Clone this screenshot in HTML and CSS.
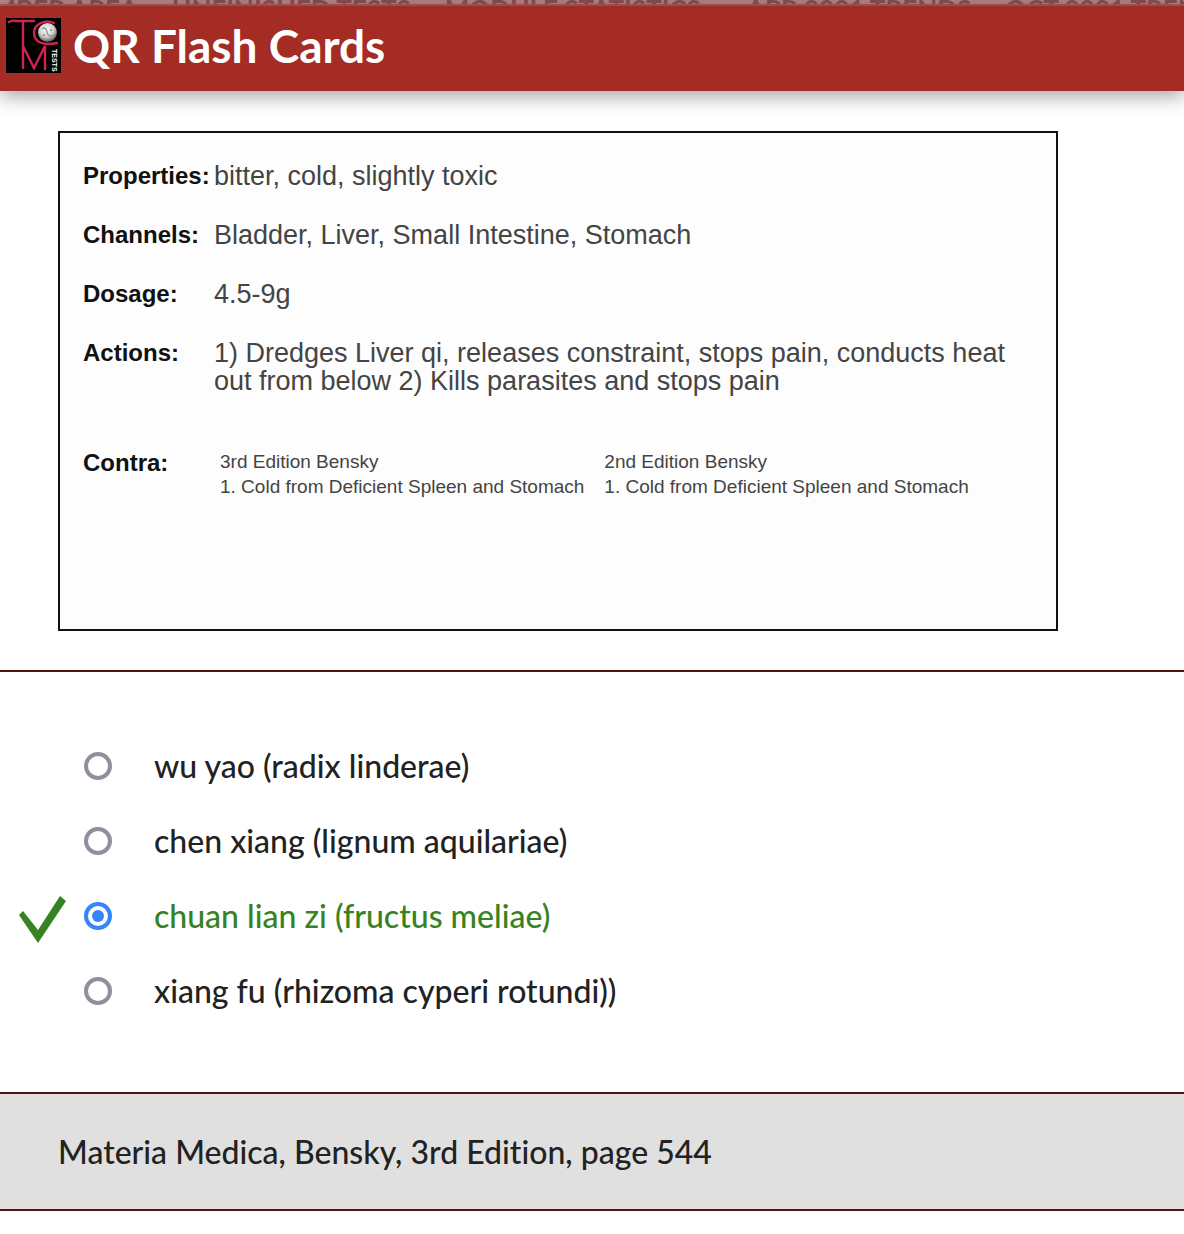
FILE: index.html
```
<!DOCTYPE html>
<html lang="en">
<head>
<meta charset="utf-8">
<title>QR Flash Cards</title>
<link rel="stylesheet" href="styles.css">
</head>
<body>
<nav class="topnav" aria-label="Sections">
  <div class="nav-group">
    <a href="#member">MEMBER AREA</a>
    <a href="#unfinished">UNFINISHED TESTS</a>
    <a href="#modules">MODULE STATISTICS</a>
  </div>
  <div class="nav-group">
    <a href="#apr">APR 2021 TRENDS</a>
    <a href="#oct">OCT 2021 TRENDS</a>
  </div>
</nav>
<header class="header">
  <svg class="logo" viewBox="0 0 55 55" role="img" aria-label="TCM Tests">
    <defs>
      <radialGradient id="ball" cx="45%" cy="35%" r="65%">
        <stop offset="0" stop-color="#fff"/>
        <stop offset=".6" stop-color="#ccc"/>
        <stop offset="1" stop-color="#555"/>
      </radialGradient>
    </defs>
    <rect width="55" height="55" fill="#000"/>
    <g fill="none" stroke="#cf2450" stroke-width="2.4" stroke-linecap="round">
      <path d="M3 4Q6 2 10 3H28"/>
      <path d="M17 4V50"/>
      <path d="M17 28L28 50L39 28V51"/>
      <path d="M48 5C39 1 28 6 28 15C28 24 37 28 51 25"/>
    </g>
    <circle cx="41.500" cy="14.500" r="9.500" fill="url(#ball)"/>
    <path d="M36 11Q40 8 41 14T48 17" fill="none" stroke="#999" stroke-width="1.500"/>
    <circle cx="38" cy="17" r="1" fill="#888"/>
    <circle cx="45" cy="12" r="1" fill="#888"/>
    <text class="logo-text" transform="translate(46 31) rotate(90)">TESTS</text>
  </svg>
  <h1 class="title">QR Flash Cards</h1>
</header>
<main>
  <section class="question">
    <dl class="card">
      <dt>Properties:</dt>
      <dd>bitter, cold, slightly toxic</dd>
      <dt>Channels:</dt>
      <dd>Bladder, Liver, Small Intestine, Stomach</dd>
      <dt>Dosage:</dt>
      <dd>4.5-9g</dd>
      <dt>Actions:</dt>
      <dd>1) Dredges Liver qi, releases constraint, stops pain, conducts heat out from below 2) Kills parasites and stops pain</dd>
      <dt>Contra:</dt>
      <dd class="contra">
        <p>3rd Edition Bensky<br>1. Cold from Deficient Spleen and Stomach</p>
        <p>2nd Edition Bensky<br>1. Cold from Deficient Spleen and Stomach</p>
      </dd>
    </dl>
  </section>
  <form class="answers">
    <div class="answer">
      <input type="radio" name="answer" id="a1">
      <label for="a1">wu yao (radix linderae)</label>
    </div>
    <div class="answer">
      <input type="radio" name="answer" id="a2">
      <label for="a2">chen xiang (lignum aquilariae)</label>
    </div>
    <div class="answer correct">
      <svg class="check" viewBox="0 0 48 48" aria-hidden="true"><path d="M4 15L0 19L19 47L47 5L41 0L19 34Z"/></svg>
      <input type="radio" name="answer" id="a3" checked>
      <label for="a3">chuan lian zi (fructus meliae)</label>
    </div>
    <div class="answer">
      <input type="radio" name="answer" id="a4">
      <label for="a4">xiang fu (rhizoma cyperi rotundi))</label>
    </div>
  </form>
</main>
<footer class="source">Materia Medica, Bensky, 3rd Edition, page 544</footer>
</body>
</html>
```
FILE: styles.css
```
* { box-sizing: border-box; }

body {
  margin: 0;
  background: #fff;
  color: #222;
  font-family: Lato, sans-serif;
  font-size: 32px;
  font-weight: 500;
  font-variant-ligatures: none;
  line-height: 40px;
}

.topnav {
  display: flex;
  gap: 46px;
  height: 6px;
  overflow: hidden;
  border-bottom: 2px solid #ab5c5a;
  background: #ba8686;
  font-size: 26px;
  font-weight: 700;
  line-height: 18px;
  white-space: nowrap;
}
.nav-group {
  display: flex;
  flex: none;
  gap: 34px;
}
.nav-group:first-child { margin-left: -48px; }
.topnav a {
  color: #7f4a4c;
  text-decoration: none;
}

.header {
  display: flex;
  align-items: center;
  gap: 12px;
  padding: 12px 6px 18px;
  background: #a42c25;
  box-shadow: 0 4px 20px rgba(0, 0, 0, .4);
}
.logo { width: 55px; height: 55px; flex: none; }
.logo-text {
  fill: #fff;
  font: 700 7px "Liberation Sans", sans-serif;
}
.title {
  margin: 0;
  color: #fff;
  font-size: 46px;
  font-weight: 700;
  line-height: 55px;
}

.question {
  padding: 40px 58px 39px;
  border-bottom: 2px solid #501314;
}
.card {
  display: grid;
  grid-template-columns: 131px 1fr;
  grid-template-rows: repeat(3, 59px) 110px 1fr;
  max-width: 1000px;
  min-height: 500px;
  margin: 0;
  padding: 29px 24px 24px 23px;
  border: 2px solid #111;
  background: #fdfdfd;
  color: #444;
  font: 27px/28px "Liberation Sans", Arial, sans-serif;
}
.card dt {
  color: #111;
  font-size: 24px;
  font-weight: 700;
}
.card dd { margin: 0; }
.card .contra {
  display: flex;
  gap: 20px;
  padding-left: 6px;
  font-size: 19px;
  line-height: 25px;
}
.contra p { margin: 0; white-space: nowrap; }

.answers { padding: 56px 58px 64px; }
.answer {
  position: relative;
  display: flex;
  align-items: center;
  gap: 42px;
  height: 75px;
  padding-left: 26px;
}
.answer input {
  appearance: none;
  display: grid;
  place-items: center;
  flex: none;
  width: 28px;
  height: 28px;
  margin: 0;
  border: 4px solid #8f8f9d;
  border-radius: 50%;
  background: #fff;
}
.answer input:checked { border-color: #3584fb; }
.answer input:checked::before {
  content: "";
  width: 12px;
  height: 12px;
  border-radius: 50%;
  background: #3584fb;
}
.correct { color: #378222; }
.check {
  position: absolute;
  left: -39px;
  top: 18px;
  width: 48px;
  height: 48px;
  fill: #378222;
}

.source {
  padding: 38px 58px 37px;
  border: solid #501314;
  border-width: 2px 0;
  background: #e0e0e0;
}
```
